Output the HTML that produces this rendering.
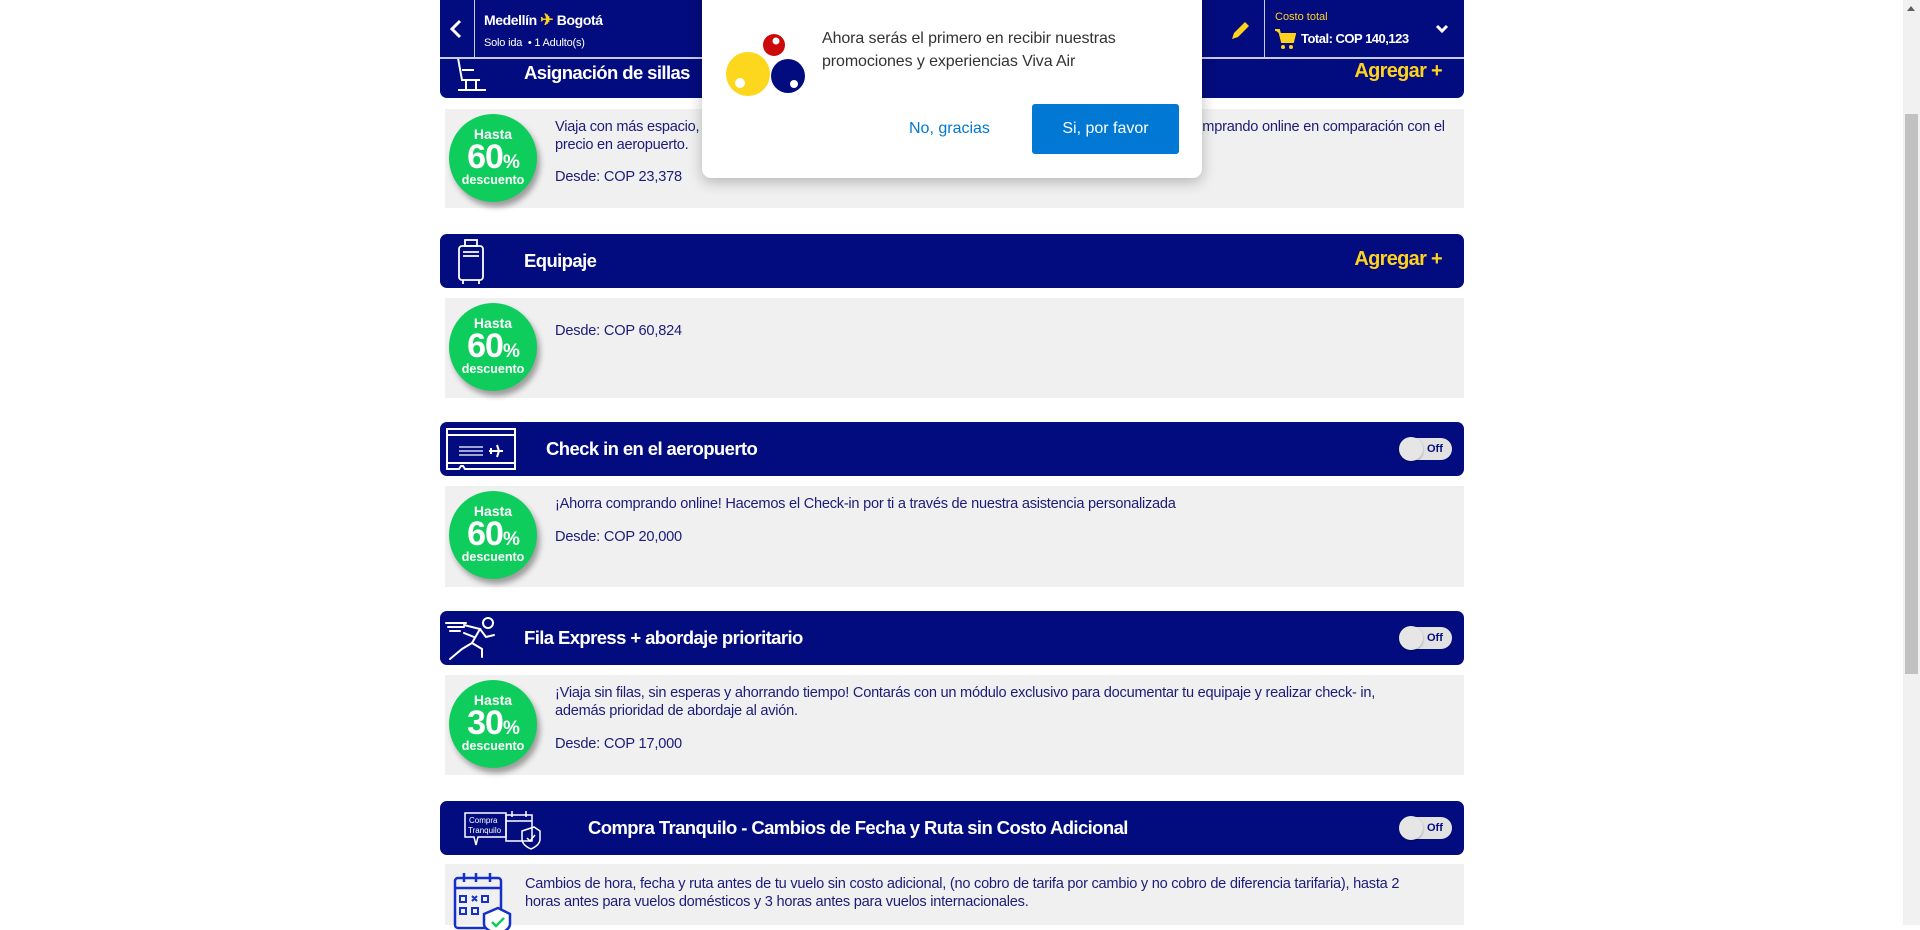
<!DOCTYPE html>
<html><head><meta charset="utf-8">
<style>
*{margin:0;padding:0;box-sizing:border-box}
body{width:1920px;height:925px;overflow:hidden;background:#fff;font-family:"Liberation Sans",sans-serif;position:relative}
.abs{position:absolute}
.hdr{position:absolute;left:440px;width:1024px;height:54px;background:#030c7e;border-radius:7px;color:#fff}
.hdr .t{position:absolute;top:16px;font-size:18.5px;font-weight:bold;letter-spacing:-0.6px}
.agr{position:absolute;right:22px;top:14px;color:#ffd21f;font-weight:bold;font-size:20px;letter-spacing:-0.7px}
.box{position:absolute;left:445px;width:1019px;background:#f0f0f0}
.box .tx{position:absolute;left:110px;top:9px;right:12px;font-size:14.6px;line-height:18px;color:#1c1c78;letter-spacing:-0.25px}
.box .d{position:absolute;left:110px;font-size:14.6px;color:#1c1c78;letter-spacing:-0.2px}
.badge{position:absolute;left:4px;top:5px;width:88px;height:88px;border-radius:50%;background:#0fcd5c;box-shadow:3px 5px 6px rgba(0,0,0,.35);color:#fff;text-align:center;font-weight:bold}
.badge .a{position:absolute;top:12px;left:0;right:0;font-size:14px}
.badge .b{position:absolute;top:24px;left:0;right:0;font-size:34px;letter-spacing:-1px;font-weight:900}
.badge .b small{font-size:19px}
.badge .c{position:absolute;top:59px;left:0;right:0;font-size:12.5px;font-weight:bold}
.tog{position:absolute;right:12px;top:16px;width:52px;height:22px;border-radius:11px;background:#e2e2e2}
.tog .k{position:absolute;left:-1px;top:-1px;width:24px;height:24px;border-radius:50%;background:#e6e6e6;box-shadow:0 1px 2px rgba(0,0,0,.3)}
.tog .o{position:absolute;left:27px;top:5px;font-size:11px;font-weight:bold;color:#030c7e}
</style></head><body>

<div class="abs" style="left:1903px;top:0;width:17px;height:925px;background:#f1f1f1"></div>
<div class="abs" style="left:1905px;top:114px;width:13px;height:560px;background:#c1c1c1"></div>
<div class="abs" style="left:1907px;top:6px;width:0;height:0;border-left:4px solid transparent;border-right:4px solid transparent;border-bottom:5px solid #606060"></div>

<div class="hdr" style="top:44px">
 <svg class="abs" style="left:14px;top:12px" width="36" height="40" viewBox="0 0 36 40" fill="none" stroke="#fff" stroke-width="2"><path d="M4 2 L8 24 H26 M8 14 H20 M12 24 V34 M22 24 V34 M4 34 H32"/></svg>
 <div class="t" style="left:84px;top:18px">Asignación de sillas</div>
 <div class="agr" style="top:16px">Agregar +</div>
</div>
<div class="box" style="top:109px;height:99px">
 <div class="badge"><div class="a">Hasta</div><div class="b">60<small>%</small></div><div class="c">descuento</div></div>
 <div class="tx">Viaja con más espacio, comodidad y tranquilidad. Selecciona tu silla preferida y ahorra hasta un 60% comprando online en comparación con el precio en aeropuerto.</div>
 <div class="d" style="top:60px">Desde: COP 23,378</div>
</div>

<div class="hdr" style="top:234px">
 <svg class="abs" style="left:16px;top:4px" width="30" height="48" viewBox="0 0 30 48" fill="none" stroke="#fff" stroke-width="1.8"><rect x="9" y="2" width="12" height="6"/><rect x="3" y="8" width="24" height="34" rx="3"/><path d="M7 14 H23 M7 18 H23 M7 42 V46 M23 42 V46"/></svg>
 <div class="t" style="left:84px">Equipaje</div>
 <div class="agr">Agregar +</div>
</div>
<div class="box" style="top:298px;height:100px">
 <div class="badge"><div class="a">Hasta</div><div class="b">60<small>%</small></div><div class="c">descuento</div></div>
 <div class="d" style="top:25px">Desde: COP 60,824</div>
</div>

<div class="hdr" style="top:422px">
 <svg class="abs" style="left:5px;top:5px" width="72" height="44" viewBox="0 0 72 44" fill="none" stroke="#fff" stroke-width="2"><path d="M2 2 H70 V42 H20 L18 39 H16 L14 42 H2 Z M2 8 H70 M2 36 H70"/><path d="M14 20 H38 M14 24 H38 M14 28 H38" stroke-width="1.2"/><path d="M44 24 H58 M52 18 L54 24 L52 30 M46 21 V27" stroke-width="2"/></svg>
 <div class="t" style="left:106px">Check in en el aeropuerto</div>
 <div class="tog"><div class="k"></div><div class="o">Off</div></div>
</div>
<div class="box" style="top:486px;height:101px">
 <div class="badge"><div class="a">Hasta</div><div class="b">60<small>%</small></div><div class="c">descuento</div></div>
 <div class="tx">¡Ahorra comprando online! Hacemos el Check-in por ti a través de nuestra asistencia personalizada</div>
 <div class="d" style="top:43px">Desde: COP 20,000</div>
</div>

<div class="hdr" style="top:611px">
 <svg class="abs" style="left:4px;top:4px" width="52" height="46" viewBox="0 0 52 46" fill="none" stroke="#fff" stroke-width="2" stroke-linecap="round"><circle cx="44" cy="8" r="5"/><path d="M2 8 H22 M4 12 H20 M6 16 H16 M20 10 L36 14 L28 28 L38 34 V42 M36 14 L42 22 L50 20 M28 28 L18 34 L6 44 M30 22 L20 18"/></svg>
 <div class="t" style="left:84px">Fila Express + abordaje prioritario</div>
 <div class="tog"><div class="k"></div><div class="o">Off</div></div>
</div>
<div class="box" style="top:675px;height:100px">
 <div class="badge"><div class="a">Hasta</div><div class="b">30<small>%</small></div><div class="c">descuento</div></div>
 <div class="tx" style="right:60px">¡Viaja sin filas, sin esperas y ahorrando tiempo! Contarás con un módulo exclusivo para documentar tu equipaje y realizar check- in, además prioridad de abordaje al avión.</div>
 <div class="d" style="top:61px">Desde: COP 17,000</div>
</div>

<div class="hdr" style="top:801px">
 <svg class="abs" style="left:22px;top:6px" width="80" height="44" viewBox="0 0 80 44" fill="none" stroke="#fff" stroke-width="1.5"><path d="M3 6 H44 V30 H16 L14 38 L12 30 H3 Z"/><text x="7" y="16" fill="#fff" stroke="none" font-size="8" font-family="Liberation Sans">Compra</text><text x="6" y="26" fill="#fff" stroke="none" font-size="8" font-family="Liberation Sans">Tranquilo</text><rect x="44" y="8" width="26" height="26"/><path d="M50 4 V10 M64 4 V10 M44 14 H70"/><path d="M60 24 L72 20 L78 24 V32 Q78 38 69 42 Q60 38 60 32 Z M65 31 L68 34 L73 28"/></svg>
 <div class="t" style="left:148px">Compra Tranquilo - Cambios de Fecha y Ruta sin Costo Adicional</div>
 <div class="tog"><div class="k"></div><div class="o">Off</div></div>
</div>
<div class="box" style="top:864px;height:61px">
 <svg class="abs" style="left:5px;top:6px" width="64" height="60" viewBox="0 0 64 60" fill="none" stroke="#1530c8" stroke-width="2.5"><rect x="5" y="8" width="46" height="50" rx="3"/><path d="M5 18 H51 M14 3 V12 M26 3 V12 M40 3 V12"/><path d="M10 26 h6 v6 h-6z M22 26 l5 5 M27 26 l-5 5 M32 26 h6 v6 h-6z M10 38 h6 v6 h-6z M22 38 h6 v6 h-6z" stroke-width="2"/><path d="M34 44 L48 38 L60 44 V54 Q60 60 48 64 Q34 60 34 54 Z" fill="#fff"/><path d="M42 52 L46 56 L54 48" stroke="#0fcd5c"/></svg>
 <div class="tx" style="left:80px;top:11px;right:34px">Cambios de hora, fecha y ruta antes de tu vuelo sin costo adicional, (no cobro de tarifa por cambio y no cobro de diferencia tarifaria), hasta 2 horas antes para vuelos domésticos y 3 horas antes para vuelos internacionales.</div>
</div>

<div class="abs" style="left:440px;top:0;width:1024px;height:59px;background:#030c7e;border-bottom:2px solid #c9cbe0"></div>
<div class="abs" style="left:474px;top:0;width:1px;height:57px;background:#c9cbe0"></div>
<svg class="abs" style="left:449px;top:19px" width="14" height="20" viewBox="0 0 14 20" fill="none" stroke="#fff" stroke-width="3"><path d="M11 2 L3 10 L11 18"/></svg>
<div class="abs" style="left:484px;top:10px;color:#fff;font-weight:bold;font-size:14px;letter-spacing:-0.4px">Medellín <span style="color:#ffd21f;font-size:16px">✈</span> Bogotá</div>
<div class="abs" style="left:484px;top:37px;color:#fff;font-size:11px;letter-spacing:-0.2px">Solo ida &nbsp;• 1 Adulto(s)</div>
<div class="abs" style="left:1168px;top:22px;color:#ffd21f;font-size:15px">eda</div>
<svg class="abs" style="left:1230px;top:19px" width="22" height="22" viewBox="0 0 22 22"><path d="M2 20 L4 14 L15 3 L19 7 L8 18 Z" fill="#ffd21f"/></svg>
<div class="abs" style="left:1264px;top:0;width:1px;height:57px;background:#c9cbe0"></div>
<div class="abs" style="left:1275px;top:11px;color:#ffd21f;font-size:11px">Costo total</div>
<svg class="abs" style="left:1274px;top:28px" width="22" height="22" viewBox="0 0 22 22"><path d="M1 2 H5 L8 14 H19 L21 6 H6" fill="#ffd21f" stroke="#ffd21f" stroke-width="2"/><circle cx="9" cy="19" r="2" fill="#ffd21f"/><circle cx="17" cy="19" r="2" fill="#ffd21f"/></svg>
<div class="abs" style="left:1301px;top:31px;color:#fff;font-size:13px;font-weight:bold;letter-spacing:-0.5px">Total: COP 140,123</div>
<svg class="abs" style="left:1435px;top:24px" width="14" height="10" viewBox="0 0 14 10" fill="none" stroke="#fff" stroke-width="3"><path d="M2 2 L7 7 L12 2"/></svg>

<div class="abs" style="left:702px;top:-10px;width:500px;height:188px;background:#fff;border-radius:0 0 9px 9px;box-shadow:0 4px 14px rgba(0,0,0,.25)"></div>
<svg class="abs" style="left:722px;top:28px" width="90" height="70" viewBox="0 0 90 70"><circle cx="52" cy="17" r="11" fill="#cc0a0a"/><circle cx="54" cy="13" r="3.5" fill="#fff"/><circle cx="26" cy="46" r="22" fill="#fdd61e"/><circle cx="18" cy="55" r="5" fill="#fff"/><circle cx="66" cy="48" r="17" fill="#030c7e"/><circle cx="72" cy="56" r="4" fill="#fff"/></svg>
<div class="abs" style="left:822px;top:27px;font-size:16px;line-height:23px;color:#333;letter-spacing:-0.1px">Ahora serás el primero en recibir nuestras<br>promociones y experiencias Viva Air</div>
<div class="abs" style="left:909px;top:120px;font-size:16px;color:#0078d4">No, gracias</div>
<div class="abs" style="left:1032px;top:104px;width:147px;height:50px;background:#0078d4;border-radius:3px;color:#fff;font-size:16px;text-align:center;line-height:50px">Si, por favor</div>

</body></html>
